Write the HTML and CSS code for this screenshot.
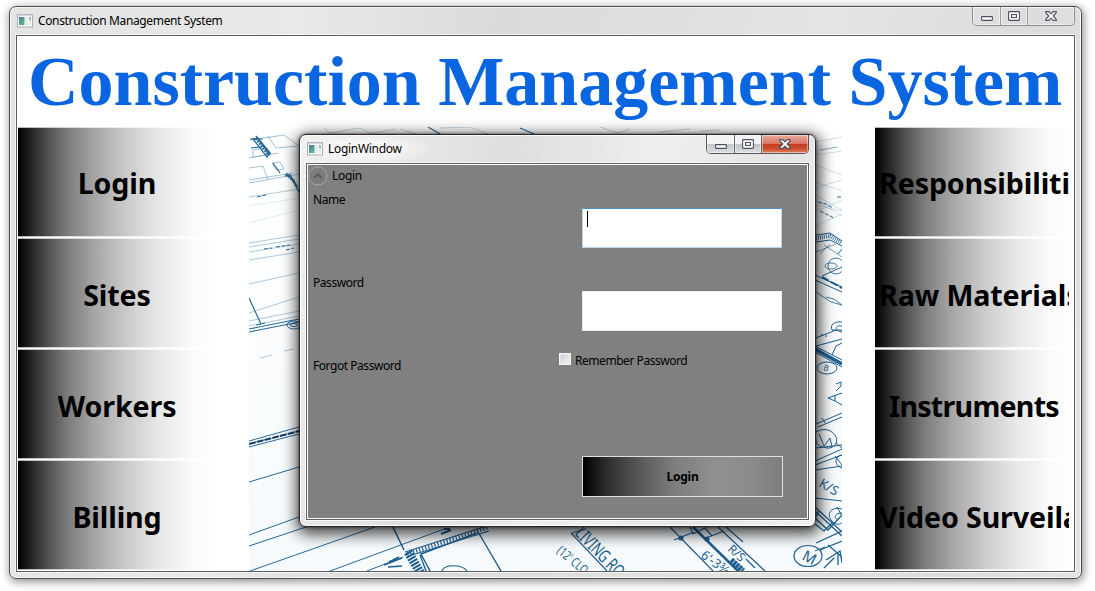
FILE: index.html
```html
<!DOCTYPE html>
<html lang="en">
<head>
<meta charset="utf-8">
<title>Construction Management System</title>
<link rel="stylesheet" href="styles.css">
</head>
<body>
<svg class="defs" width="0" height="0">
  <defs>
    <linearGradient id="pane" x1="0" y1="0" x2="0.6" y2="1"><stop offset="0" stop-color="#4a78a8"/><stop offset="1" stop-color="#62b487"/></linearGradient>
    <symbol id="app" viewBox="0 0 16 14">
      <rect x="0.5" y="0.5" width="15" height="12.5" fill="#fbfbfc" stroke="#a9afb8"/>
      <path d="M0.5 1.2h15" stroke="#c4c9d1"/>
      <rect x="2" y="3" width="5.5" height="8" fill="url(#pane)"/>
      <rect x="8.3" y="3" width="2.6" height="8" fill="#e3e6ea"/>
      <rect x="12" y="3" width="2" height="3.5" fill="#8fc0a8"/>
      <rect x="12" y="7" width="2" height="4" fill="#e8ebee"/>
    </symbol>
    <symbol id="min" viewBox="0 0 12 5"><rect x="0.6" y="0.6" width="10.8" height="3.8" rx="0.8" fill="#fff" stroke="#4a4f61" stroke-width="1.1"/></symbol>
    <symbol id="max" viewBox="0 0 12 10"><rect x="0.6" y="0.6" width="10.8" height="8.8" rx="0.8" fill="#fff" stroke="#4a4f61" stroke-width="1.1"/><rect x="3.5" y="3.5" width="5" height="3" fill="#eee" stroke="#4a4f61"/></symbol>
    <symbol id="close" viewBox="0 0 12 10"><path d="M.7.6h3.2L6 2.900 8.100.6h3.200v1.100L8.200 5l3.100 3.300v1.100H8.100L6 7.100 3.900 9.400H.7V8.300L3.800 5 .7 1.700z" fill="#fff" stroke="#4a4f61" stroke-width="1.100" stroke-linejoin="round"/></symbol>
  </defs>
</svg>

<div class="window main-window">
  <header class="titlebar">
    <svg class="app-icon" width="16" height="14"><use href="#app"/></svg>
    <span class="caption main-caption">Construction Management System</span>
    <div class="controls">
      <span class="ctl ctl-min"><svg width="12" height="5"><use href="#min"/></svg></span>
      <span class="ctl ctl-max"><svg width="12" height="10"><use href="#max"/></svg></span>
      <span class="ctl ctl-close"><svg width="12" height="10"><use href="#close"/></svg></span>
    </div>
  </header>
  <main class="client">
    <h1 class="heading">Construction Management System</h1>
    <div class="columns">
      <nav class="menu">
        <div class="tile"><span>Login</span></div>
        <div class="tile"><span>Sites</span></div>
        <div class="tile"><span>Workers</span></div>
        <div class="tile"><span>Billing</span></div>
      </nav>
      <svg class="blueprint" width="593" height="444" viewBox="249 127 593 444">
        <defs>
          <linearGradient id="paper" x1="0" y1="0" x2="0" y2="1"><stop offset="0" stop-color="#fff"/><stop offset="1" stop-color="#f6fafc"/></linearGradient>
        </defs>
        <rect x="249" y="127" width="593" height="444" fill="url(#paper)"/>
        <g fill="none" stroke="#6fa0c2" stroke-width="0.8">
          <path d="M250 140l34-5 14 10M249 158l30-5M268 136l8 12 22-2M249 180l44-7M249 183l50-9M253 150l14-2 4 6-18 3zM272 163l8-1 4 7-8 1zM249 168l14-2 5 14" opacity=".8"/>
          <path d="M249 197l50-8M249 243l50-8M249 247l50-8M249 252l50-8M249 260l50-8M249 284l50-11M249 313l50-16M249 321l50-10M249 326l50-10M260 358l12-3M284 351l10-2" opacity=".7"/>
          <path d="M249 206l50-8M249 223l50-13" opacity=".25"/>
          <path d="M324 128l6 6M330 133l30-5 12 6M372 133l24-4M400 129l16 5M440 128l30-1 18 7M600 127l18 6 12-4M660 132l30-3M700 131l20-1" opacity=".55"/>
          <path d="M815 142l27-5M815 155l27-4M815 165l27 10M815 188l27-8M815 182l27 9M815 195l27 15M815 205l27 6M815 212l27-12M815 200l27 16M815 226l27-12" opacity=".4"/>
        </g>
        <g fill="none" stroke="#2a6a99" stroke-width="1">
          <path d="M820 150l17-3" opacity=".6"/>
          <path d="M264 249l8-1M276 247l14-2M286 250l8-2M257 197l9-2M818 202l8 2 7 4M837 197h5M820 211l14 7" stroke-dasharray="4 1.500"/>
          <path d="M253 139l5-1 12 15-3 4zM256 136l14 19M285 176l5-1 8 12M289 174l10 18M273 163l7 10" stroke-width="1.300"/>
          <path d="M256 138l12 16M286 174l8 7" stroke-width="3" stroke-dasharray="2 1"/>
          <path d="M250 139h13M251 148l10-1M428 127l12 7M520 128l14 6M249 329l50-10M249 332l50-10M249 298l12 26M256 325l9-2" stroke-width="1.200"/>
          <ellipse cx="294" cy="325" rx="7" ry="4"/><ellipse cx="294" cy="325" rx="4" ry="1.500"/>
          <path d="M249 441l50-14M249 447l50-13M249 482l50-15M249 535l50-18M249 546l60-20M250 571l125-44M330 571l117-43M367 571l36-14"/>
          <path d="M249 444l50-13" stroke="#113d68" stroke-width="2" stroke-dasharray="7 1"/>
        </g>
        <g fill="none" stroke="#1f5f90" stroke-width="1.200">
          <path d="M393 527l11 23M388 567l14-1M389 562l10-5M384 565l18-7" stroke-width="1.500"/>
          <path d="M405 552l85-27M409 556l80-25" stroke-width="1.200"/>
          <path d="M407 554l82-27" stroke-width="4" stroke-dasharray="1.200 2"/>
          <path d="M441 534l10-4M444 529h6" stroke-width="2"/>
          <path d="M408 552l13 22" stroke-width="9" stroke-dasharray="2 1.200"/>
          <path d="M430 571l-9-17 56-21M426 571l-6-16M477 530l24 41" stroke-width="1.400"/>
          <path d="M442 571c2-7 20-7 25 0"/>
          <path d="M571 533l36 38M572 533l14-4M670 527l43 44M718 527l47 44M726 527l17 15M690 527l3 7 12-6 7 8M674 540l20-8M706 538l18-7" stroke-width="1.200"/>
          <path d="M693 527l45 44" stroke-width="2.500"/><path d="M731 560l12 11" stroke-width="6" stroke-dasharray="3 .6"/>
          <circle cx="681" cy="538" r="2" fill="#1f5f90"/><circle cx="707" cy="539" r="2" fill="#1f5f90"/>
          <path d="M746 559l9 9"/>
          <ellipse cx="808" cy="556" rx="14" ry="10.500"/>
        </g>
        <g class="lettering" fill="#1f5f90">
          <text transform="translate(574 534) rotate(46)" font-size="18" textLength="62" lengthAdjust="spacingAndGlyphs">LIVING RO</text>
          <text transform="translate(556 552) rotate(40)" font-size="13" textLength="36" lengthAdjust="spacingAndGlyphs">(12' CLO</text>
          <text transform="translate(700 557) rotate(36)" font-size="13" textLength="31" lengthAdjust="spacingAndGlyphs">6'-3¾</text>
          <text transform="translate(727 550) rotate(42)" font-size="12">R/S</text>
          <text transform="translate(801 559) rotate(28)" font-size="15">M</text>
          <text transform="translate(818 486) rotate(30)" font-size="13">K/S</text>
          <text transform="translate(823 370) rotate(15)" font-size="8">B</text>
        </g>
        <g fill="none" stroke="#1f5f90" stroke-width="1">
          <path d="M816 235l14-2 12 8M816 242l14-2 12 6"/><path d="M816 238l14-2 12 7" stroke-width="4" stroke-dasharray=".8 1.200"/>
          <path d="M816 252l20-8M824 245l18 12M830 244l-10 10" opacity=".6"/>
          <g opacity=".8"><ellipse cx="836" cy="266" rx="8" ry="8"/><ellipse cx="831" cy="266" rx="6" ry="3"/></g>
          <path d="M815 275l27 12M815 280l27 12M822 276l20-9M838 254l4-5"/><path d="M822 277l20 11" stroke-width="2" stroke-dasharray="8 2"/>
          <path d="M816 292l15 10 11 3M826 297l8 2 8 6" opacity=".8"/>
          <path d="M842 322c-9-1-12 4-10 8h10M842 326c-5-1-7 2-5 3M816 338l20-8 6 2M821 335h2M825 336h2M816 346l26-7M832 355l4-9 6-3"/>
          <path d="M815 349l27 15" stroke-width="3.500"/><path d="M815 346l27 14M815 352l27 15"/>
          <ellipse cx="827" cy="368" rx="10" ry="6"/>
          <path d="M836 384l5-2v4l-5 5M828 398l14-5M828 398l7 3 7 4M835 401v-6M816 424l26-11M818 427l24-10M822 418l3 5M816 432c8-5 17-2 20 5s-4 12-9 11-12-3-11-8M819 434l5 12 6-8 2 9M816 448l26-3M836 443l6 5"/>
          <path d="M815 461l27-12M815 465l27-10M815 470l27-4M842 455c-8 1-8 11 0 13M835 456l7 9M815 498l27 3"/>
          <path d="M815 507l27 25M815 511l27 25M819 511l-4 7 13 12 14-15M815 524l9 7 8-8M816 543l26-12M828 545l14 12M820 550l22-9M826 560l14-9 2 12M824 568l10-10M838 553v12" stroke-width="1.300"/>
          <path d="M842 509c-12-3-16 6-10 12s8 2 10 2M842 513c-7 0-9 5-4 7M837 507l5 9M815 551l10-4"/>
        </g>
      </svg>
      <nav class="menu menu-right">
        <div class="tile"><span>Responsibilities</span></div>
        <div class="tile"><span>Raw Materials</span></div>
        <div class="tile centered"><span>Instruments</span></div>
        <div class="tile"><span>Video Surveilance</span></div>
      </nav>
    </div>
  </main>
</div>

<section class="window dialog">
  <header class="titlebar">
    <svg class="app-icon" width="16" height="14"><use href="#app"/></svg>
    <span class="caption dialog-caption">LoginWindow</span>
    <div class="controls active">
      <span class="ctl ctl-min"><svg width="12" height="5"><use href="#min"/></svg></span>
      <span class="ctl ctl-max"><svg width="12" height="10"><use href="#max"/></svg></span>
      <span class="ctl ctl-close"><svg width="12" height="10"><use href="#close"/></svg></span>
    </div>
  </header>
  <div class="client form">
    <div class="expander">
      <svg width="20" height="20" viewBox="0 0 20 20"><circle cx="10" cy="10" r="9" fill="#7c7c7c" stroke="#a6a6a6"/><path d="M6.500 11.800L10 8.300l3.500 3.500" fill="none" stroke="#5b5b5b" stroke-width="2"/></svg>
      <span>Login</span>
    </div>
    <div class="row">
      <label>Name</label>
      <div class="input focused"><i class="caret"></i></div>
    </div>
    <div class="row">
      <label>Password</label>
      <div class="input"></div>
    </div>
    <div class="row options">
      <label>Forgot Password</label>
      <div class="remember"><i class="checkbox"></i><span>Remember Password</span></div>
    </div>
    <div class="submit"><span>Login</span></div>
  </div>
</section>
</body>
</html>
```

FILE: styles.css
```css
* { box-sizing: border-box; }
body {
  margin: 0;
  width: 1095px;
  height: 591px;
  padding: 6px 0 0 9px;
  overflow: hidden;
  background: #fff;
  color: #000;
  font: 12px/16px "Noto Sans", "Open Sans", sans-serif;
}
.defs { position: absolute; }
svg { display: block; }

.window {
  display: flex;
  flex-direction: column;
  border: 1px solid #4b4b4b;
  border-radius: 7px;
  padding: 0 6px 6px;
}
.main-window {
  width: 1073px;
  height: 573px;
  background: linear-gradient(100deg, #e3e3e3 0%, #e9e9e9 25%, #dadada 42%, #e4e4e4 70%, #dcdcdc 88%, #e3e3e3 100%);
  box-shadow: inset 0 0 0 1px #f7f7f7, 1px 2px 9px 1px rgba(0, 0, 0, .42);
}
.titlebar {
  display: flex;
  flex: 0 0 28px;
  padding-left: 1px;
}
.app-icon { margin-top: 7px; }
.caption {
  flex: 1;
  margin: 6px 0 0 5px;
  white-space: nowrap;
}
.main-caption { letter-spacing: -0.36px; }
.dialog-caption { letter-spacing: -0.3px; }

.controls {
  display: flex;
  width: 103px;
  height: 19px;
  border: 1px solid #8e8e8e;
  border-top: 0;
  border-radius: 0 0 5px 5px;
  overflow: hidden;
}
.ctl {
  display: flex;
  align-items: center;
  justify-content: center;
  box-shadow: inset 0 0 0 1px rgba(255, 255, 255, .45);
}
.ctl-min { width: 28px; padding-top: 5px; border-right: 1px solid #9a9a9a; }
.ctl-max { width: 27px; border-right: 1px solid #9a9a9a; }
.ctl-close { flex: 1; }
.active { border-color: #55575d; }
.active .ctl { background: linear-gradient(#f2f2f3 0 48%, #c1c3c7 50%, #dcdee1); border-color: #62656b; }
.active .ctl-close { background: linear-gradient(#e9a99c 0, #dc7866 47%, #c23c22 50%, #cf5230 80%, #e08b68); }

.client {
  flex: 1;
  min-height: 0;
  border: 1px solid #5f6160;
  background: #fff;
  overflow: hidden;
}
.main-window .client { box-shadow: 0 0 0 1px #f4f4f4; }

.heading {
  margin: 0;
  height: 91px;
  padding-left: 11px;
  font: bold 70px/91px "Liberation Serif", "Times New Roman", serif;
  color: #0a66e0;
  white-space: nowrap;
}
.columns {
  display: grid;
  grid-template-columns: 198px 593px 198px;
  column-gap: 33px;
  padding-left: 1px;
}
.menu {
  display: grid;
  grid-template-columns: minmax(0, 1fr);
  grid-template-rows: repeat(4, 110px);
  row-gap: 1px;
}
.tile {
  display: flex;
  align-items: center;
  justify-content: center;
  padding: 4px 4px 0;
  border: solid rgba(255, 255, 255, .7);
  border-width: 1px 0;
  background: linear-gradient(90deg, #000, #2c2c2c 8%, #545454 16%, #7c7c7c 25%, #a9a9a9 40%, #cdcdcd 56%, #e7e7e7 71%, #fafafa 88%, #fff) border-box;
  font: bold 28.6px/40px "Noto Sans", "Open Sans", sans-serif;
  letter-spacing: -0.1px;
  white-space: nowrap;
}
.tile:first-child { padding-top: 2px; }
.tile span { overflow: hidden; }
.menu-right .tile { justify-content: flex-start; }
.menu-right .centered { justify-content: center; letter-spacing: -0.75px; }

.dialog {
  position: absolute;
  left: 299px;
  top: 134px;
  width: 517px;
  height: 393px;
  border-color: #262626;
  background:
    radial-gradient(ellipse 70px 16px at 65px 14px, #fff, transparent),
    linear-gradient(105deg, #f0f0f0, #dedede 35%, #eee 58%, #e4e4e4 80%, #f0f0f0);
  box-shadow: inset 0 0 0 1px #fff, 0 0 3px rgba(0, 0, 0, .6), 1px 4px 15px 3px rgba(0, 0, 0, .75);
}
.form {
  display: flex;
  flex-direction: column;
  background: #808080;
  box-shadow: inset 0 0 0 1px #fff, 0 0 0 1px #f8f8f8;
}
.expander {
  display: flex;
  align-items: center;
  height: 22px;
  gap: 4px;
  padding: 1px 0 0 1px;
}
.expander span { padding-top: 1px; letter-spacing: -0.3px; }
.row {
  display: flex;
  flex: 0 0 83px;
  padding: 6px 26px 0 6px;
  justify-content: space-between;
  letter-spacing: -0.45px;
}
.input {
  width: 200px;
  height: 40px;
  margin-top: 16px;
  padding: 2px 0 0 4px;
  border: 1px solid #eee;
  background: #fff;
}
.focused { border-color: #4a90c8 #b5d4ea #b5d4ea; }
.caret { display: block; width: 1px; height: 16px; background: #000; }
.options { flex-basis: 105px; justify-content: flex-start; }
.options label { width: 245px; }
.remember { display: flex; gap: 4px; margin-top: -5px; }
.checkbox {
  width: 12px;
  height: 12px;
  margin: 0 0 0 1px;
  border: 1px solid #f4f4f4;
  background: linear-gradient(135deg, #c3c8ce, #fafafa);
  box-shadow: inset 0 0 0 1px #e4e4e4;
}
.submit {
  display: flex;
  align-items: center;
  justify-content: center;
  align-self: flex-end;
  width: 201px;
  height: 41px;
  margin: -1px 25px 0 0;
  border: 1px solid #e0e0e0;
  background: linear-gradient(90deg, #000, #343434 14%, #5c5c5c 30%, #7f7f7f 47%, #909090 67%, #8d8d8d 82%, #7d7d7d);
  font-weight: bold;
  letter-spacing: -0.2px;
}
```
